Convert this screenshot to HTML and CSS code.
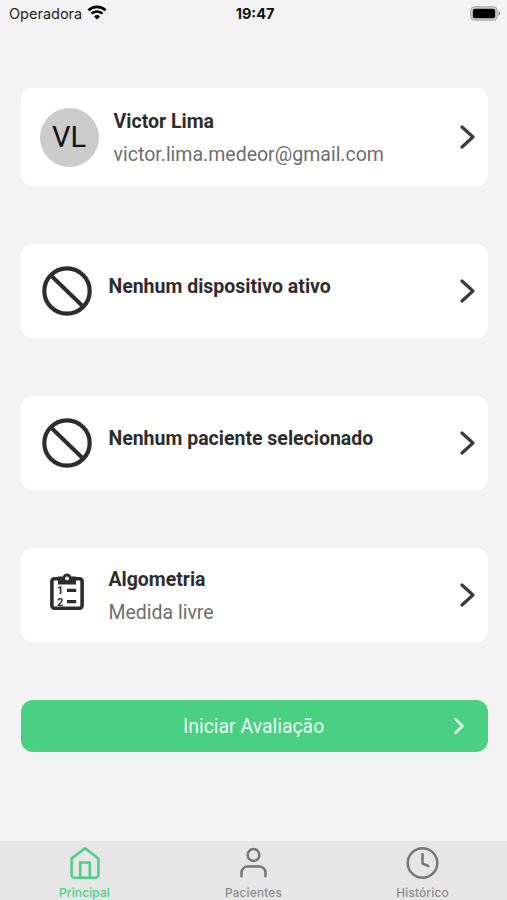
FILE: index.html
```html
<!DOCTYPE html>
<html lang="pt-BR">
<head>
    <meta charset="UTF-8">
    <meta name="viewport" content="width=device-width, initial-scale=1.0">
    <title>Principal</title>
    <link rel="stylesheet" href="styles.css">
</head>
<body>
    <header class="status-bar">
        <div class="carrier">
            <span>Operadora</span>
            <svg class="wifi" width="20" height="15" viewBox="0 0 20 15">
                <path d="M1.4 5.3a12.4 12.4 0 0 1 17.2 0" fill="none" stroke="#000" stroke-width="2.7"/>
                <path d="M4.5 8.6a8 8 0 0 1 11 0" fill="none" stroke="#000" stroke-width="2.5"/>
                <path d="M10 14.5l-3-3.1a4.4 4.4 0 0 1 6 0z" fill="#000"/>
            </svg>
        </div>
        <div class="time">19:47</div>
        <div class="battery">
            <svg width="31" height="15" viewBox="0 0 31 15">
                <rect x="0.8" y="0.8" width="26.4" height="13.4" rx="4" fill="#d9d9d9" stroke="#aaa" stroke-width="1.2"/>
                <rect x="2.8" y="2.8" width="22.4" height="9.4" rx="2" fill="#000"/>
                <path d="M28.4 5v5q1.8-.8 1.8-2.5T28.4 5z" fill="#999"/>
            </svg>
        </div>
    </header>

    <main class="content">
        <a class="card card-user">
            <div class="avatar">VL</div>
            <div class="info">
                <p class="title">Victor Lima</p>
                <p class="subtitle">victor.lima.medeor@gmail.com</p>
            </div>
            <svg class="chevron" width="16" height="26" viewBox="0 0 16 26"><path d="M3 3l11 10L3 23"/></svg>
        </a>

        <a class="card">
            <div class="icon">
                <svg width="52" height="52" viewBox="0 0 52 52" fill="none" stroke="#2d2d2d">
                    <circle cx="26" cy="26" r="22.7" stroke-width="4.2"/>
                    <path d="M10 10.5l32 31" stroke-width="4"/>
                </svg>
            </div>
            <div class="info">
                <p class="title">Nenhum dispositivo ativo</p>
            </div>
            <svg class="chevron" width="16" height="26" viewBox="0 0 16 26"><path d="M3 3l11 10L3 23"/></svg>
        </a>

        <a class="card">
            <div class="icon">
                <svg width="52" height="52" viewBox="0 0 52 52" fill="none" stroke="#2d2d2d">
                    <circle cx="26" cy="26" r="22.7" stroke-width="4.2"/>
                    <path d="M10 10.5l32 31" stroke-width="4"/>
                </svg>
            </div>
            <div class="info">
                <p class="title">Nenhum paciente selecionado</p>
            </div>
            <svg class="chevron" width="16" height="26" viewBox="0 0 16 26"><path d="M3 3l11 10L3 23"/></svg>
        </a>

        <a class="card">
            <div class="icon">
                <svg width="52" height="52" viewBox="0 0 52 52">
                    <rect x="10.9" y="9.8" width="30.2" height="29.4" rx="2.4" fill="none" stroke="#2d2d2d" stroke-width="3.6"/>
                    <path d="M17 7.5h4.8a4.4 4.4 0 0 1 8.4 0H35v8H17z" fill="#2d2d2d"/>
                    <circle cx="26" cy="9.4" r="1.9" fill="#fff"/>
                    <path d="M26 21.4h9.2M26 32.6h9.2" stroke="#2d2d2d" stroke-width="3.4"/>
                    <text class="digit" x="16" y="25.4">1</text>
                    <text class="digit" x="16" y="36.6">2</text>
                </svg>
            </div>
            <div class="info">
                <p class="title">Algometria</p>
                <p class="subtitle">Medida livre</p>
            </div>
            <svg class="chevron" width="16" height="26" viewBox="0 0 16 26"><path d="M3 3l11 10L3 23"/></svg>
        </a>

        <button class="start">
            <span>Iniciar Avaliação</span>
            <svg width="12" height="18" viewBox="0 0 12 18"><path d="M2.5 2.2l7 6.8-7 6.8"/></svg>
        </button>
    </main>

    <nav class="tab-bar">
        <a class="tab active">
            <svg width="34" height="34" viewBox="0 0 34 34">
                <path d="M3.6 12.5L17 2.3l13.4 10.2v16.2a3 3 0 0 1-3 3H6.600a3 3 0 0 1-3-3zM12.2 31.5V16.6h9.6v14.9"/>
            </svg>
            <span>Principal</span>
        </a>
        <a class="tab">
            <svg width="34" height="34" viewBox="0 0 34 34">
                <circle cx="16.5" cy="9" r="5.9"/>
                <path d="M4.5 30.2v-3.6a6 6 0 0 1 6-6h12a6 6 0 0 1 6 6v3.6"/>
            </svg>
            <span>Pacientes</span>
        </a>
        <a class="tab">
            <svg width="34" height="34" viewBox="0 0 34 34">
                <circle cx="16.5" cy="17" r="14.8"/>
                <path d="M16.5 8v9.5l6 2.6"/>
            </svg>
            <span>Histórico</span>
        </a>
    </nav>
</body>
</html>
```
FILE: styles.css
```css
* {
    box-sizing: border-box;
}

body {
    margin: 0;
    height: 900px;
    display: flex;
    flex-direction: column;
    background-color: #f3f3f3;
    font-family: Roboto, sans-serif;
    overflow: hidden;
}

p {
    margin: 0;
}

/* Status bar */
.status-bar {
    height: 28px;
    display: grid;
    grid-template-columns: 1fr auto 1fr;
    align-items: center;
    padding: 0 6px 0 9px;
    font-family: Inter, sans-serif;
    font-size: 14.5px;
    line-height: 18px;
    color: #222;
}

.carrier {
    display: flex;
    align-items: center;
    gap: 5px;
}

.wifi {
    margin-top: -3px;
}

.time {
    font-weight: 700;
    color: #111;
}

.battery {
    display: flex;
    justify-content: flex-end;
    margin-top: -1px;
}

/* Cards */
.content {
    flex: 1;
    padding: 60px 19.4px 0 20.6px;
}

.card {
    display: flex;
    height: 94.5px;
    margin-bottom: 57.5px;
    padding: 0 13px 0 20px;
    background-color: #fff;
    border-radius: 12px;
}

.card-user {
    height: 98px;
    padding-left: 19px;
}

.avatar {
    width: 59px;
    height: 59px;
    margin-right: 15px;
    align-self: center;
    border-radius: 50%;
    background-color: #cbcbcb;
    color: #111;
    font-size: 29px;
    line-height: 59px;
    text-align: center;
}

.icon {
    width: 52px;
    height: 52px;
    margin-right: 15.8px;
    align-self: center;
}

.icon svg {
    display: block;
}

.digit {
    font-family: Roboto, sans-serif;
    font-size: 11px;
    font-weight: 700;
    fill: #2d2d2d;
}

.info {
    flex: 1;
    padding-top: 15px;
}

.card-user .info {
    padding-top: 17px;
}

.card .info .title:only-child {
    padding-top: 11px;
}

.title,
.subtitle {
    font-size: 19.5px;
    line-height: 33px;
    color: #6e6e6e;
}

.title {
    font-weight: 700;
    color: #2d2d2d;
}

.chevron {
    align-self: center;
}

.chevron path {
    fill: none;
    stroke: #3c3c3c;
    stroke-width: 3.2;
    stroke-linecap: round;
    stroke-linejoin: round;
}

.start {
    display: grid;
    grid-template-columns: 1fr auto 1fr;
    align-items: center;
    width: 100%;
    height: 52.5px;
    padding: 0 23px 0 22px;
    border: none;
    border-radius: 12px;
    background-color: #49d083;
    color: #eafff2;
    font-family: Roboto, sans-serif;
    font-size: 19.4px;
}

.start span {
    grid-column: 2;
    padding-top: 1px;
}

.start svg {
    justify-self: end;
}

.start path {
    fill: none;
    stroke: #eafff2;
    stroke-width: 2.5;
    stroke-linecap: round;
    stroke-linejoin: round;
}

/* Bottom navigation */
.tab-bar {
    display: flex;
    height: 59.5px;
    background-color: #e6e6e6;
}

.tab {
    flex: 1;
    display: flex;
    flex-direction: column;
    align-items: center;
    padding-top: 5px;
    color: #8a8a8a;
    font-family: Inter, sans-serif;
    font-size: 11.8px;
    font-weight: 500;
    line-height: 14px;
    letter-spacing: 0.2px;
}

.tab svg {
    flex: none;
    margin-bottom: 6px;
    fill: none;
    stroke: #777;
    stroke-width: 2.5;
    stroke-linecap: round;
    stroke-linejoin: round;
}

.tab.active {
    color: #49d083;
}

.tab.active svg {
    stroke: #49d083;
}
```
